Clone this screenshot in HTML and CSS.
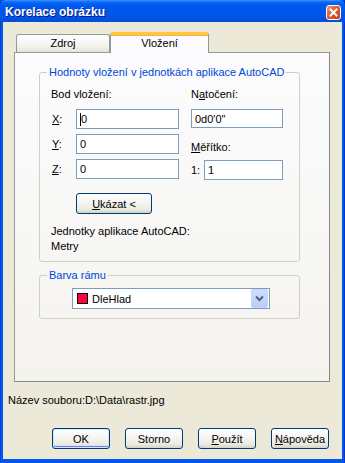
FILE: index.html
```html
<!DOCTYPE html>
<html>
<head>
<meta charset="utf-8">
<title>Korelace obrázku</title>
<link rel="stylesheet" href="styles.css">
</head>
<body>
	<div class="window">
		<div class="titlebar">
			<span class="title">Korelace obrázku</span>
			<span class="close">
				<svg width="13" height="13" viewBox="0 0 13 13"><path d="M3.5 3.5L9.5 9.5M9.5 3.5L3.5 9.5" stroke="#fff" stroke-width="2" stroke-linecap="square"/></svg>
			</span>
		</div>
		<div class="client">
			<div class="tabs">
				<div class="tab">Zdroj</div>
				<div class="tab tab-active">Vložení</div>
			</div>
			<div class="panel">
				<fieldset class="group group-insert">
					<legend>Hodnoty vložení v jednotkách aplikace AutoCAD</legend>
					<div class="cols">
						<div class="col-left">
							<div class="lbl">Bod vložení:</div>
							<div class="coord first"><span class="axis"><u>X</u>:</span><span class="edit edit-xyz"><i class="caret"></i>0</span></div>
							<div class="coord"><span class="axis"><u>Y</u>:</span><span class="edit edit-xyz">0</span></div>
							<div class="coord"><span class="axis"><u>Z</u>:</span><span class="edit edit-xyz">0</span></div>
							<button class="btn btn-show"><u>U</u>kázat &lt;</button>
							<div class="lbl units">Jednotky aplikace AutoCAD:</div>
							<div class="lbl">Metry</div>
						</div>
						<div class="col-right">
							<div class="lbl">N<u>a</u>točení:</div>
							<span class="edit edit-rot">0d0'0"</span>
							<div class="lbl scale-lbl"><u>M</u>ěřítko:</div>
							<div class="scale-row"><span class="one">1:</span><span class="edit edit-scale">1</span></div>
						</div>
					</div>
				</fieldset>
				<fieldset class="group group-color">
					<legend>Barva rámu</legend>
					<div class="combo">
						<span class="swatch"></span>
						<span class="combo-text">DleHlad</span>
						<span class="drop">
							<svg width="9" height="7" viewBox="0 0 9 7"><path d="M1 1.5L4.5 5L8 1.5" stroke="#4d6185" stroke-width="2" fill="none"/></svg>
						</span>
					</div>
				</fieldset>
			</div>
			<div class="filename">Název souboru:D:\Data\rastr.jpg</div>
			<div class="buttons">
				<button class="btn btn-default">OK</button>
				<button class="btn">Storno</button>
				<button class="btn"><u>P</u>oužít</button>
				<button class="btn"><u>N</u>ápověda</button>
			</div>
		</div>
	</div>
</body>
</html>
```
FILE: styles.css
```css
*{margin: 0;padding: 0;box-sizing: border-box;}
body{
	font-family: "Liberation Sans", Arial, sans-serif;
	font-size: 11px;
	color: #000;
	background: #fff;
}
u{
	text-decoration: underline;
	text-underline-offset: 1px;
}
.window{
	display: flex;
	flex-direction: column;
	width: 345px;
	height: 463px;
	background: linear-gradient(90deg, #0831d9 0, #0055e5 1px, #0058ee 3px, #0058ee 342px, #0055e5 344px, #001ea0 345px);
}
.titlebar{
	display: flex;
	justify-content: space-between;
	align-items: center;
	height: 22px;
	padding: 0 4px 0 5px;
	border-radius: 6px 6px 0 0;
	background: linear-gradient(#3d95ff 0, #0a6bf4 2px, #0058ee 5px, #0054e6 17px, #0050de 20px, #0b4fd0 22px);
}
.title{
	color: #fff;
	font-weight: bold;
	font-size: 12px;
	text-shadow: 1px 1px 0 #0a1883;
	padding-top: 1px;
}
.close{
	display: flex;
	align-items: center;
	justify-content: center;
	width: 15px;
	height: 15px;
	margin-top: 3px;
	border: 1px solid #fff;
	border-radius: 3px;
	background: linear-gradient(135deg, #f09a7c 0, #e0582f 45%, #c4401a 100%);
}
.client{
	flex: 1;
	margin: 0 3px 4px;
	padding: 10px 0 0 0;
	background: #ece9d8;
}
.tabs{
	display: flex;
	align-items: flex-end;
	height: 20px;
	margin-left: 13px;
	position: relative;
	z-index: 1;
}
.tab{
	width: 94px;
	height: 18px;
	text-align: center;
	line-height: 17px;
	font-size: 11px;
	border: 1px solid #919b9c;
	border-bottom: none;
	border-radius: 3px 3px 0 0;
	background: linear-gradient(#fefefe, #f4f3ee 60%, #e6e4da);
}
.tab-active{
	width: 99px;
	height: 21px;
	margin-bottom: -1px;
	line-height: 16px;
	border-left: 1px solid #919b9c;
	border-top: 3px solid #ffc83c;
	box-shadow: inset 0 1px 0 #f7b34a;
	background: #fcfcfe;
}
.panel{
	width: 316px;
	height: 330px;
	margin-left: 11px;
	padding: 12px 0 0 24px;
	border: 1px solid #919b9c;
	border-right-color: #7f8a8b;
	border-bottom-color: #7f8a8b;
	background: linear-gradient(#fcfcfe, #f4f3ee);
}
.group{
	width: 261px;
	border: 1px solid #d0d0bf;
	border-radius: 3px;
	padding: 8px 0 7px 7px;
}
.group legend{
	padding: 0 2px;
	line-height: 14px;
	font-size: 11px;
	white-space: nowrap;
	color: #0046d5;
}
.cols{
	display: flex;
	padding-left: 4px;
}
.lbl{
	line-height: 14px;
	white-space: nowrap;
}
.col-left{
	width: 140px;
}
.coord{
	display: flex;
	align-items: center;
	height: 20px;
	margin-top: 5px;
}
.coord.first{
	margin-top: 8px;
}
.axis{
	width: 25px;
	padding-left: 1px;
}
.edit{
	display: flex;
	align-items: center;
	height: 20px;
	padding-left: 3px;
	border: 1px solid #7f9db9;
	background: #fff;
}
.edit-xyz{
	width: 103px;
}
.caret{
	display: inline-block;
	width: 1px;
	height: 13px;
	background: #000;
}
.btn{
	display: flex;
	align-items: center;
	justify-content: center;
	width: 58px;
	height: 21px;
	font-family: "Liberation Sans", Arial, sans-serif;
	font-size: 11px;
	color: #000;
	border: 1px solid #003c74;
	border-radius: 3px;
	background: linear-gradient(#fff 0, #f6f6f2 40%, #ebeae3 80%, #d6d0c5 100%);
}
.btn-show{
	width: 76px;
	margin: 14px 0 0 25px;
}
.units{
	margin-top: 10px;
	line-height: 15px;
}
.units + .lbl{
	line-height: 15px;
}
.col-right{
	flex: 1;
}
.edit-rot{
	width: 92px;
	height: 19px;
	margin-top: 8px;
}
.scale-lbl{
	margin-top: 12px;
}
.scale-row{
	display: flex;
	align-items: center;
	margin-top: 6px;
}
.one{
	width: 13px;
}
.edit-scale{
	width: 79px;
}
.group-color{
	margin-top: 6px;
	padding: 6px 0 9px 7px;
}
.combo{
	display: flex;
	align-items: center;
	width: 198px;
	height: 21px;
	margin-left: 25px;
	padding: 0 1px 0 4px;
	border: 1px solid #7f9db9;
	background: #fff;
}
.swatch{
	width: 11px;
	height: 11px;
	border: 1px solid #000;
	background: #ff0040;
}
.combo-text{
	flex: 1;
	padding-left: 4px;
}
.drop{
	display: flex;
	align-items: center;
	justify-content: center;
	width: 17px;
	height: 19px;
	border-radius: 2px;
	background: linear-gradient(#d2defc, #b9cdf9);
	border: 1px solid #c3d3fd;
}
.filename{
	margin: 11px 0 0 5px;
	line-height: 14px;
}
.buttons{
	display: flex;
	justify-content: flex-end;
	gap: 15px;
	margin-top: 21px;
	padding-right: 13px;
}
.btn-default{
	box-shadow: inset 0 0 0 1px #cee7ff, inset 0 -1px 0 1px #6982ee;
}
```
